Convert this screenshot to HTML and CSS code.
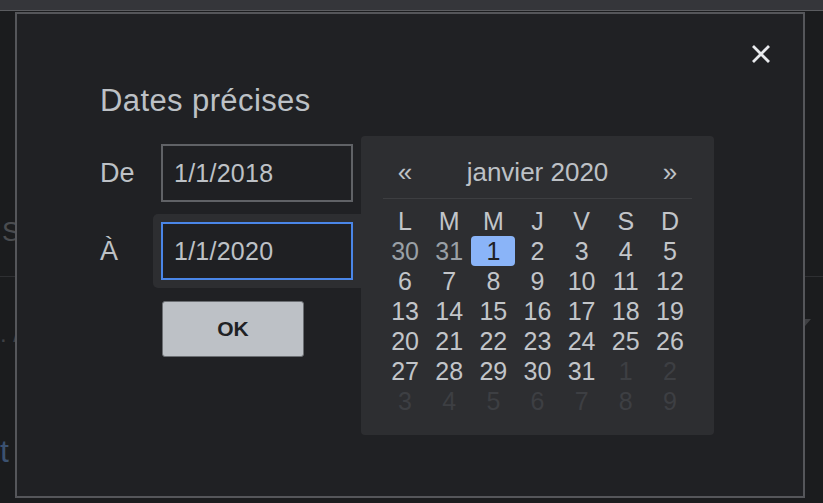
FILE: index.html
```html
<!DOCTYPE html>
<html lang="fr">
<head>
<meta charset="utf-8">
<title>Dates précises</title>
<link rel="stylesheet" href="styles.css">
</head>
<body>
<div class="page">
  <div class="topbar"></div>
  <div class="bg-top"><span class="bg-s">S</span></div>
  <div class="bg-mid">
    <div class="bg-row">
      <span class="bg-dots">. /</span>
      <span class="bg-caret"></span>
    </div>
    <div class="bg-link">t</div>
  </div>
</div>

<div class="dialog">
  <button class="close" aria-label="Fermer">
    <svg viewBox="0 0 20 20" width="20" height="20"><path d="M2 2 L18 18 M18 2 L2 18" stroke="#e8eaed" stroke-width="2.8" fill="none"/></svg>
  </button>
  <h2 class="title">Dates précises</h2>
  <div class="form">
    <span class="label">De</span>
    <div class="field">1/1/2018</div>
    <span class="label">À</span>
    <div class="field-wrap"><div class="field focused">1/1/2020</div></div>
    <button class="ok">OK</button>
  </div>

  <div class="calendar">
    <div class="cal-head">
      <span>«</span>
      <span class="month">janvier 2020</span>
      <span>»</span>
    </div>
    <div class="cal-grid">
      <span>L</span><span>M</span><span>M</span><span>J</span><span>V</span><span>S</span><span>D</span>
      <span class="prev">30</span><span class="prev">31</span><span class="sel">1</span><span>2</span><span>3</span><span>4</span><span>5</span>
      <span>6</span><span>7</span><span>8</span><span>9</span><span>10</span><span>11</span><span>12</span>
      <span>13</span><span>14</span><span>15</span><span>16</span><span>17</span><span>18</span><span>19</span>
      <span>20</span><span>21</span><span>22</span><span>23</span><span>24</span><span>25</span><span>26</span>
      <span>27</span><span>28</span><span>29</span><span>30</span><span>31</span><span class="next">1</span><span class="next">2</span>
      <span class="next">3</span><span class="next">4</span><span class="next">5</span><span class="next">6</span><span class="next">7</span><span class="next">8</span><span class="next">9</span>
    </div>
  </div>
</div>
</body>
</html>
```

FILE: styles.css
```css
* { box-sizing: border-box; margin: 0; padding: 0; }
html, body { width: 823px; height: 503px; overflow: hidden; }
body {
  background: #1b1c1e;
  font-family: "Liberation Sans", Arial, sans-serif;
  color: #bdc1c6;
  position: relative;
}

/* background page (under scrim) */
.topbar { height: 11px; background: #35363a; border-bottom: 1px solid #5b5c60; }
.bg-top {
  height: 266px;
  border-bottom: 1px solid #2e2f32;
  padding: 205px 0 0 2px;
  font-size: 27px;
  line-height: 32px;
  color: #4a4c50;
}
.bg-mid { padding-top: 42px; }
.bg-row { display: flex; justify-content: space-between; align-items: flex-start; height: 40px; }
.bg-dots { font-size: 24px; line-height: 30px; color: #3f4145; margin-left: 0; }
.bg-caret {
  width: 0; height: 0;
  border-left: 6px solid transparent;
  border-right: 6px solid transparent;
  border-top: 7px solid #3f4043;
  margin-right: 12px;
}
.bg-link { font-size: 32px; line-height: 36px; color: #3b5170; margin: 74px 0 0 0; }

/* dialog */
.dialog {
  position: absolute;
  left: 15px;
  top: 12px;
  width: 790px;
  height: 486px;
  background: #202124;
  border: 2px solid #55565a;
  padding: 70px 0 0 83px;
}
.close {
  position: absolute;
  top: 30px;
  right: 32px;
  width: 20px;
  height: 20px;
  background: none;
  border: none;
  display: block;
}
.close svg { display: block; }
.title {
  font-size: 31px;
  line-height: 34px;
  font-weight: 400;
  letter-spacing: 0.4px;
  color: #bdc1c6;
  margin-bottom: 26px;
}
.form {
  display: grid;
  grid-template-columns: 61px 192px;
  grid-template-rows: 58px 58px 57px;
  row-gap: 20px;
  align-items: center;
}
.label { font-size: 27px; color: #bdc1c6; }
.field {
  height: 58px;
  border: 2px solid #606266;
  background: #1f2023;
  font-size: 25px;
  letter-spacing: 0.25px;
  color: #bdc1c6;
  padding-left: 11px;
  display: flex;
  align-items: center;
}
.field-wrap {
  margin: -8px;
  padding: 8px;
  background: #2d2e31;
  border-radius: 5px 0 0 5px;
}
.field.focused { border-color: #4a86e8; }
.ok {
  grid-column: 2;
  align-self: end;
  width: 142px;
  height: 56px;
  margin-left: 1px;
  background: #bdc1c6;
  border: 1px solid #6b6e72;
  border-radius: 3px;
  font-family: "Liberation Sans", Arial, sans-serif;
  font-weight: 700;
  font-size: 21px;
  color: #202124;
  display: flex;
  align-items: center;
  justify-content: center;
}

/* calendar popup */
.calendar {
  position: absolute;
  left: 344px;
  top: 122px;
  width: 353px;
  height: 299px;
  background: #2d2e31;
  border-radius: 4px;
  padding: 21px 22px 0;
}
.cal-head {
  display: grid;
  grid-template-columns: repeat(7, 1fr);
  height: 42px;
  padding-bottom: 11px;
  border-bottom: 1px solid #3d3e41;
  font-size: 26px;
  line-height: 30px;
  text-align: center;
  color: #bdc1c6;
}
.cal-head .month { grid-column: 2 / span 5; }
.cal-grid {
  margin-top: 7px;
  display: grid;
  grid-template-columns: repeat(7, 1fr);
  grid-auto-rows: 30px;
  font-size: 25px;
  line-height: 30px;
  text-align: center;
  color: #c2c5c9;
}
.cal-grid .prev { color: #9aa0a6; }
.cal-grid .next { color: #3d3f43; }
.cal-grid .sel { background: #8ab4f8; color: #202124; border-radius: 4px; }
```
